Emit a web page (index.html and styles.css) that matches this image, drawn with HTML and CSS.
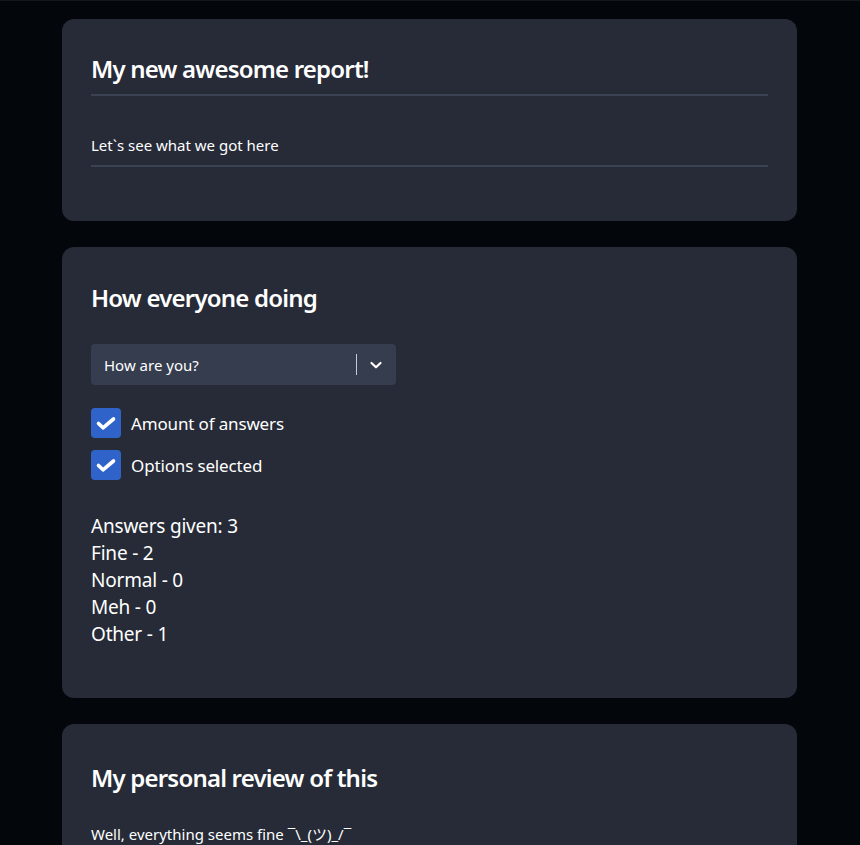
FILE: index.html
```html
<!DOCTYPE html>
<html lang="en">
<head>
<meta charset="utf-8">
<title>Report</title>
<link rel="stylesheet" href="styles.css">
</head>
<body>
<main class="page">
  <section class="card card-intro">
    <h1 class="title title-underlined">My new awesome report!</h1>
    <p class="field">Let`s see what we got here</p>
  </section>

  <section class="card card-question">
    <h2 class="title">How everyone doing</h2>
    <div class="select">
      <span class="select-value">How are you?</span>
      <span class="select-indicators">
        <span class="select-sep"></span>
        <svg class="select-chevron" width="14" height="14" viewBox="0 0 14 14"><path d="M2.5 5 L7 9.3 L11.5 5" fill="none" stroke="#fff" stroke-width="2.2" stroke-linecap="round" stroke-linejoin="round"/></svg>
      </span>
    </div>
    <div class="checks">
      <label class="check">
        <span class="box"><svg width="30" height="30" viewBox="0 0 30 30"><path d="M7.5 15.5 L12 19.8 L22.5 11" fill="none" stroke="#fff" stroke-width="3.6" stroke-linecap="round" stroke-linejoin="round"/></svg></span>
        <span class="check-label">Amount of answers</span>
      </label>
      <label class="check">
        <span class="box"><svg width="30" height="30" viewBox="0 0 30 30"><path d="M7.5 15.5 L12 19.8 L22.5 11" fill="none" stroke="#fff" stroke-width="3.6" stroke-linecap="round" stroke-linejoin="round"/></svg></span>
        <span class="check-label">Options selected</span>
      </label>
    </div>
    <div class="stats">
      <div>Answers given: 3</div>
      <div>Fine - 2</div>
      <div>Normal - 0</div>
      <div>Meh - 0</div>
      <div>Other - 1</div>
    </div>
  </section>

  <section class="card card-review">
    <h2 class="title">My personal review of this</h2>
    <p class="review">Well, everything seems fine ¯\_(ツ)_/¯</p>
  </section>
</main>
</body>
</html>
```

FILE: styles.css
```css
html, body {
  margin: 0;
  padding: 0;
}

body {
  background: #03060b;
  color: #ffffff;
  font-family: "Noto Sans", "Open Sans", "Noto Sans CJK JP", sans-serif;
  border-top: 1px solid #14171c;
  height: 844px;
  overflow: hidden;
}

.page {
  width: 735px;
  margin-left: calc(50% - 368px);
  padding-top: 18px;
  display: flex;
  flex-direction: column;
  gap: 26px;
}

.card {
  background: #262b37;
  border-radius: 12px;
  padding: 34px 29px 34px 29px;
}

.title {
  margin: 0;
  font-size: 24px;
  line-height: 32px;
  font-weight: 600;
  letter-spacing: -0.8px;
}

.title-underlined {
  padding-bottom: 9px;
  border-bottom: 2px solid #3b4254;
}

.field {
  margin: 38px 0 20px;
  font-size: 15px;
  line-height: 22px;
  padding-bottom: 9px;
  border-bottom: 2px solid #3b4254;
}

.card-question {
  padding-top: 35px;
  padding-bottom: 50px;
}

.select {
  margin-top: 30px;
  width: 305px;
  height: 41px;
  box-sizing: border-box;
  background: #353d4f;
  border-radius: 4px;
  display: flex;
  align-items: center;
  justify-content: space-between;
  padding-left: 13px;
}

.select-value {
  font-size: 15px;
  line-height: 20px;
}

.select-indicators {
  display: flex;
  align-items: center;
  height: 100%;
}

.select-sep {
  width: 1px;
  height: 21px;
  background: #c5c9d1;
  margin-right: 12px;
}

.select-chevron {
  display: block;
  margin-right: 13px;
}

.checks {
  margin-top: 23px;
  display: flex;
  flex-direction: column;
  gap: 12px;
}

.check {
  display: flex;
  align-items: center;
  gap: 10px;
}

.box {
  width: 30px;
  height: 30px;
  border-radius: 4px;
  background: #2f63c9;
  display: block;
}

.box svg {
  display: block;
}

.check-label {
  font-size: 17px;
  line-height: 24px;
  letter-spacing: -0.15px;
  padding-top: 1px;
}

.stats {
  margin-top: 33px;
  font-size: 19px;
  line-height: 27px;
  letter-spacing: -0.2px;
}

.card-review {
  padding-top: 38px;
}

.review {
  margin: 29px 0 0;
  font-size: 15px;
  line-height: 22px;
}
```
